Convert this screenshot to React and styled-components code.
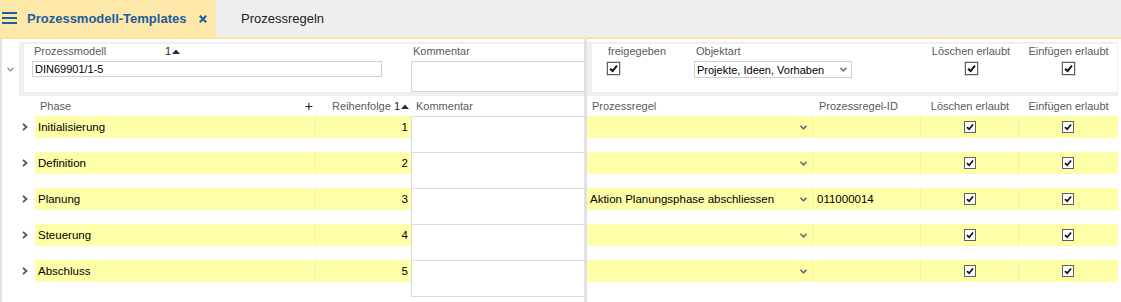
import React from 'react';
import styled, { createGlobalStyle } from 'styled-components';

const Global = createGlobalStyle`
  html, body { margin: 0; padding: 0; background: #fff; }
  body { font-family: "Liberation Sans", Arial, sans-serif; color: #000; }
`;

const YELLOW = '#ffffaa';
const SPLIT = '#e3e0e9';
const BLUE = '#1f5c9e';

const Page = styled.div`
  display: flex;
  flex-direction: column;
  width: 1121px;
  height: 302px;
  overflow: hidden;
`;

const TabBar = styled.div`
  display: flex;
  flex-shrink: 0;
  height: 37px;
  background: #efefef;
  border-bottom: 2px solid #fde49f;
`;

const Tab = styled.div`
  display: flex;
  align-items: center;
  height: 100%;
  box-sizing: border-box;
  width: ${p => p.$width}px;
  padding-left: ${p => p.$pad}px;
  background: ${p => (p.$active ? '#fde8a9' : 'transparent')};
  color: ${p => (p.$active ? BLUE : '#222')};
  font-size: 13px;
  font-weight: ${p => (p.$active ? 700 : 400)};
`;

const TabTitle = styled.span`
  margin-left: ${p => p.$ml || 0}px;
`;

const CloseIcon = styled.svg`
  margin-left: 13px;
`;

const Body = styled.div`
  display: flex;
  flex: 1;
  min-height: 0;
`;

const LeftPane = styled.div`
  width: 582px;
  flex-shrink: 0;
  border-left: 2px solid ${SPLIT};
  display: flex;
  flex-direction: column;
  overflow: hidden;
`;

const Splitter = styled.div`
  width: 3px;
  flex-shrink: 0;
  background: ${SPLIT};
`;

const RightPane = styled.div`
  flex: 1;
  display: flex;
  flex-direction: column;
  overflow: hidden;
`;

const FormRow = styled.div`
  display: flex;
  flex-shrink: 0;
  margin-top: 3px;
`;

const FormExpander = styled.div`
  width: 17px;
  flex-shrink: 0;
  display: flex;
  align-items: center;
  justify-content: center;
`;

const FormFrame = styled.div`
  flex: 1;
  min-width: 0;
  background: #efefef;
  padding: 2px ${p => p.$right || 0}px 4px 5px;
  margin-right: ${p => p.$mr || 0}px;
  display: flex;
`;

const FormInner = styled.div`
  flex: 1;
  min-width: 0;
  height: 48px;
  background: #fff;
  display: flex;
  padding-top: 1px;
  box-sizing: border-box;
  overflow: hidden;
`;

const Field = styled.div`
  display: flex;
  flex-direction: column;
  align-items: ${p => (p.$center ? 'center' : 'flex-start')};
  width: ${p => p.$w}px;
  margin-left: ${p => p.$ml || 0}px;
  flex-shrink: 0;
`;

const Label = styled.div`
  display: flex;
  align-items: center;
  height: 13px;
  line-height: 13px;
  margin-bottom: 3px;
  padding-left: ${p => (p.$center ? 0 : 2)}px;
  font-size: 11px;
  color: #5a5a5a;
  white-space: nowrap;
`;

const LabelText = styled.span`
  display: inline-block;
  width: ${p => (p.$w ? `${p.$w}px` : 'auto')};
`;

const SortMark = styled.span`
  display: inline-flex;
  align-items: center;
  gap: 1px;
  color: #222;
  font-size: 11px;
`;

const TextInput = styled.div`
  box-sizing: border-box;
  width: 100%;
  height: 16px;
  border: 1px solid #cfcfcf;
  padding-left: 2px;
  font-size: 11px;
  line-height: 14px;
  color: #000;
  white-space: nowrap;
`;

const TextArea = styled.div`
  box-sizing: border-box;
  width: 190px;
  height: 32px;
  border: 1px solid #d4d4d4;
`;

const Select = styled.div`
  box-sizing: border-box;
  width: 100%;
  height: 17px;
  border: 1px solid #cfcfcf;
  display: flex;
  align-items: center;
  justify-content: space-between;
  padding: 0 4px 0 2px;
  font-size: 11px;
  color: #000;
  white-space: nowrap;
`;

const CheckRing = styled.span`
  display: inline-flex;
  box-sizing: border-box;
  width: 15px;
  height: 15px;
  border: 1px solid #d8d8d8;
`;

const CheckBox = styled.span`
  display: inline-flex;
  align-items: center;
  justify-content: center;
  box-sizing: border-box;
  width: ${p => p.$size || 13}px;
  height: ${p => p.$size || 13}px;
  border: 1px solid #606060;
  background: #fff;
`;

const GridHeader = styled.div`
  display: flex;
  flex-shrink: 0;
  height: 20px;
  align-items: center;
  font-size: 11px;
  color: #5a5a5a;
  white-space: nowrap;
`;

const HeadCell = styled.div`
  box-sizing: border-box;
  width: ${p => p.$w}px;
  flex-shrink: 0;
  display: flex;
  align-items: center;
  justify-content: ${p => p.$justify || 'flex-start'};
  padding-left: ${p => p.$pl || 0}px;
  padding-right: ${p => p.$pr || 0}px;
`;

const Plus = styled.span`
  font-size: 14px;
  color: #222;
`;

const GridRow = styled.div`
  display: flex;
  height: 36px;
  flex-shrink: 0;
`;

const RowExpander = styled.div`
  width: 33px;
  flex-shrink: 0;
  height: 22px;
  display: flex;
  align-items: center;
  padding-left: 20px;
  box-sizing: border-box;
`;

const Cell = styled.div`
  box-sizing: border-box;
  width: ${p => p.$w}px;
  flex-shrink: 0;
  height: 22px;
  background: ${YELLOW};
  border-right: 1px solid ${p => (p.$last ? YELLOW : '#f4f1a6')};
  display: flex;
  align-items: center;
  justify-content: ${p => p.$justify || 'flex-start'};
  padding-left: ${p => p.$pl || 0}px;
  padding-right: ${p => p.$pr || 0}px;
  font-size: 11.5px;
  color: #000;
  white-space: nowrap;
`;

const CommentCell = styled.div`
  box-sizing: border-box;
  width: 174px;
  flex-shrink: 0;
  height: 37px;
  border: 1px solid #dcdcdc;
  background: #fff;
`;

const Hamburger = () => (
  <svg width="15" height="13" viewBox="0 0 15 13">
    <rect x="0" y="0" width="15" height="2" fill={BLUE} />
    <rect x="0" y="5" width="15" height="2" fill={BLUE} />
    <rect x="0" y="10" width="15" height="2" fill={BLUE} />
  </svg>
);

const Check = ({ size = 9 }) => (
  <svg width={size} height={size} viewBox="0 0 10 10">
    <path d="M1.2 5.2 L4 7.8 L8.8 1.8" fill="none" stroke="#111" strokeWidth="2.2" strokeLinejoin="miter" />
  </svg>
);

const ChevronDown = ({ color = '#777' }) => (
  <svg width="7" height="5" viewBox="0 0 7 5">
    <path d="M0.5 0.8 L3.5 3.8 L6.5 0.8" fill="none" stroke={color} strokeWidth="1.6" />
  </svg>
);

const ChevronRight = () => (
  <svg width="6" height="8" viewBox="0 0 6 8">
    <path d="M1 0.8 L4.5 4 L1 7.2" fill="none" stroke="#555" strokeWidth="1.8" />
  </svg>
);

const Triangle = () => (
  <svg width="8" height="5" viewBox="0 0 8 5">
    <path d="M0 5 L4 0.5 L8 5 Z" fill="#1c2e4a" />
  </svg>
);

const Sort = () => (
  <SortMark>
    1<Triangle />
  </SortMark>
);

const phases = [
  { name: 'Initialisierung', order: 1, rule: '', id: '' },
  { name: 'Definition', order: 2, rule: '', id: '' },
  { name: 'Planung', order: 3, rule: 'Aktion Planungsphase abschliessen', id: '011000014' },
  { name: 'Steuerung', order: 4, rule: '', id: '' },
  { name: 'Abschluss', order: 5, rule: '', id: '' },
];

export default function App() {
  return (
    <Page>
      <Global />
      <TabBar>
        <Tab $active $width={216} $pad={2}>
          <Hamburger />
          <TabTitle $ml={10}>Prozessmodell-Templates</TabTitle>
          <CloseIcon width="8" height="8" viewBox="0 0 8 8">
            <path d="M0.8 0.8 L7.2 7.2 M7.2 0.8 L0.8 7.2" stroke={BLUE} strokeWidth="2" />
          </CloseIcon>
        </Tab>
        <Tab $width={140} $pad={25}>
          <TabTitle>Prozessregeln</TabTitle>
        </Tab>
      </TabBar>
      <Body>
        <LeftPane>
          <FormRow>
            <FormExpander>
              <ChevronDown color="#a0a0a0" />
            </FormExpander>
            <FormFrame>
              <FormInner>
                <Field $w={350} $ml={8}>
                  <Label>
                    <LabelText $w={131}>Prozessmodell</LabelText>
                    <Sort />
                  </Label>
                  <TextInput>DIN69901/1-5</TextInput>
                </Field>
                <Field $w={190} $ml={29}>
                  <Label>Kommentar</Label>
                  <TextArea />
                </Field>
              </FormInner>
            </FormFrame>
          </FormRow>
          <GridHeader>
            <HeadCell $w={33} />
            <HeadCell $w={281} $pl={5} $pr={3} $justify="space-between">
              <span>Phase</span>
              <Plus>+</Plus>
            </HeadCell>
            <HeadCell $w={95} $pr={2} $justify="flex-end">
              <span>Reihenfolge&nbsp;</span>
              <Sort />
            </HeadCell>
            <HeadCell $w={150} $pl={5}>Kommentar</HeadCell>
          </GridHeader>
          {phases.map(p => (
            <GridRow key={p.name}>
              <RowExpander>
                <ChevronRight />
              </RowExpander>
              <Cell $w={281} $pl={3}>{p.name}</Cell>
              <Cell $w={95} $pr={2} $justify="flex-end" $last>{p.order}</Cell>
              <CommentCell />
            </GridRow>
          ))}
        </LeftPane>
        <Splitter />
        <RightPane>
          <FormRow>
            <FormFrame $right={1} $mr={3}>
              <FormInner>
                <Field $w={88} $ml={14}>
                  <Label>freigegeben</Label>
                  <CheckRing>
                    <CheckBox>
                      <Check />
                    </CheckBox>
                  </CheckRing>
                </Field>
                <Field $w={158}>
                  <Label>Objektart</Label>
                  <Select>
                    <span>Projekte, Ideen, Vorhaben</span>
                    <ChevronDown color="#777" />
                  </Select>
                </Field>
                <Field $w={98} $ml={70} $center>
                  <Label $center>Löschen erlaubt</Label>
                  <CheckRing>
                    <CheckBox>
                      <Check />
                    </CheckBox>
                  </CheckRing>
                </Field>
                <Field $w={97} $center>
                  <Label $center>Einfügen erlaubt</Label>
                  <CheckRing>
                    <CheckBox>
                      <Check />
                    </CheckBox>
                  </CheckRing>
                </Field>
              </FormInner>
            </FormFrame>
          </FormRow>
          <GridHeader>
            <HeadCell $w={226} $pl={5}>Prozessregel</HeadCell>
            <HeadCell $w={108} $pl={6}>Prozessregel-ID</HeadCell>
            <HeadCell $w={98} $justify="center">Löschen erlaubt</HeadCell>
            <HeadCell $w={99} $justify="center">Einfügen erlaubt</HeadCell>
          </GridHeader>
          {phases.map(p => (
            <GridRow key={p.name}>
              <Cell $w={226} $pl={3} $pr={5} $justify="space-between">
                <span>{p.rule}</span>
                <ChevronDown color="#707070" />
              </Cell>
              <Cell $w={108} $pl={4}>{p.id}</Cell>
              <Cell $w={98} $justify="center">
                <CheckBox $size={12}>
                  <Check size={8} />
                </CheckBox>
              </Cell>
              <Cell $w={99} $justify="center" $last>
                <CheckBox $size={12}>
                  <Check size={8} />
                </CheckBox>
              </Cell>
            </GridRow>
          ))}
        </RightPane>
      </Body>
    </Page>
  );
}
